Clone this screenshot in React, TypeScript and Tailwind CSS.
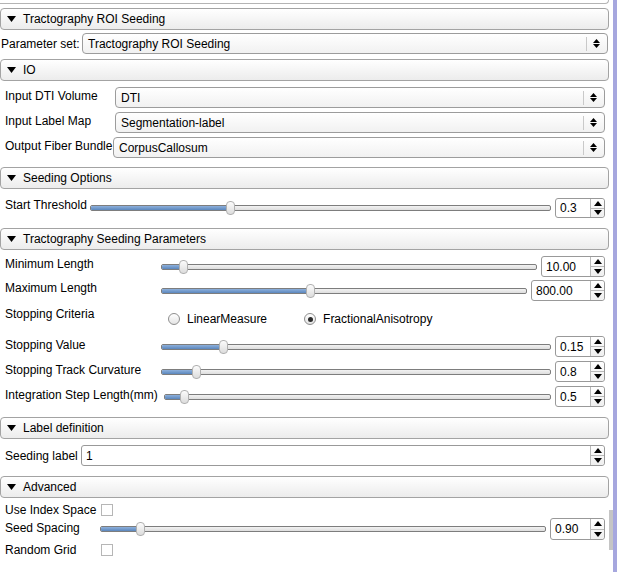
import React from "react";

// small drawings used by several widgets
function Caret() {
  return (
    <svg width="9" height="6" viewBox="0 0 9 6">
      <polygon points="0,0 9,0 4.5,6" fill="#000" />
    </svg>
  );
}

function UpDownArrows() {
  return (
    <svg width="7" height="9" viewBox="0 0 7 9">
      <polygon points="3.5,0 7,4 0,4" fill="#000" />
      <polygon points="0,5 7,5 3.5,9" fill="#000" />
    </svg>
  );
}

function Header({ title, className = "" }: { title: string; className?: string }) {
  return (
    <div
      className={`flex h-[22px] w-[609px] shrink-0 items-center rounded-[4px] border border-[#a3a3a3] bg-gradient-to-b from-white to-[#ececec] ${className}`}
    >
      <div className="ml-[6px] flex w-[16px] items-center">
        <Caret />
      </div>
      <span>{title}</span>
    </div>
  );
}

function Combo({ value, className = "" }: { value: string; className?: string }) {
  return (
    <div
      className={`flex h-full items-center rounded-[4px] border border-[#9c9c9c] bg-gradient-to-b from-white to-[#f1f1f1] ${className}`}
    >
      <span className="flex-1 pl-[5px]">{value}</span>
      <div className="h-[14px] w-px bg-[#c9c9c9]" />
      <div className="ml-[6px] mr-[7px] flex items-center">
        <UpDownArrows />
      </div>
    </div>
  );
}

function Spin({ value, className = "" }: { value: string; className?: string }) {
  return (
    <div className={`flex h-full shrink-0 rounded-[3px] border border-[#999] bg-white ${className}`}>
      <div className="flex flex-1 items-center pl-[4px]">{value}</div>
      <div className="flex w-[14px] flex-col overflow-hidden rounded-r-[3px] border-l border-[#b9b9b9] bg-gradient-to-b from-white to-[#efefef]">
        <div className="flex flex-1 items-center justify-center border-b border-[#b9b9b9]">
          <svg width="8" height="5" viewBox="0 0 8 5">
            <polygon points="4,0 8,5 0,5" fill="#000" />
          </svg>
        </div>
        <div className="flex flex-1 items-center justify-center">
          <svg width="8" height="5" viewBox="0 0 8 5">
            <polygon points="0,0 8,0 4,5" fill="#000" />
          </svg>
        </div>
      </div>
    </div>
  );
}

function Slider({ value, className = "" }: { value: number; className?: string }) {
  const pct = `${value * 100}%`;
  return (
    <div className={`relative h-[14px] ${className}`}>
      <div className="absolute left-0 right-0 top-[4px] h-[6px] overflow-hidden rounded-[2px] border border-[#7d7d7d] bg-gradient-to-b from-[#f2f2f2] to-[#dedede]">
        <div className="h-full bg-gradient-to-b from-[#8db0dc] to-[#5b87bd]" style={{ width: pct }} />
      </div>
      <div
        className="absolute top-0 h-[14px] w-[9px] rounded-[4px] border border-[#b0b0b0] bg-gradient-to-b from-[#fcfcfc] to-[#dcdcdc]"
        style={{ left: `calc(${pct} - 4px)` }}
      />
    </div>
  );
}

function Radio({ checked, label, className = "" }: { checked?: boolean; label: string; className?: string }) {
  return (
    <div className={`flex items-center ${className}`}>
      <div className="flex h-[12px] w-[12px] items-center justify-center rounded-full border border-[#8e8e8e] bg-gradient-to-b from-white to-[#e4e4e4]">
        {checked && <div className="h-[5px] w-[5px] rounded-full bg-[#2b2b2b]" />}
      </div>
      <span className="ml-[7px]">{label}</span>
    </div>
  );
}

function Check() {
  return <div className="h-[12px] w-[12px] border border-[#b6b6b6] bg-white" />;
}

export default function App() {
  return (
    <div className="relative flex h-[572px] w-[617px] overflow-hidden bg-white font-['Liberation_Sans',Arial,sans-serif] text-[12px] leading-none text-black">
      <div className="flex w-[613px] flex-col">
        {/* end of the panel above */}
        <div className="h-[4px] w-[609px] shrink-0 rounded-br-[4px] border-b border-r border-[#b4b4b4]" />

        <Header title="Tractography ROI Seeding" className="mt-[4px]" />
        <div className="mt-[3px] flex h-[21px] w-[608px] items-center">
          <span className="w-[82px] shrink-0 pl-[1px]">Parameter set:</span>
          <Combo value="Tractography ROI Seeding" className="flex-1" />
        </div>

        {/* IO */}
        <Header title="IO" className="mt-[5px]" />
        <div className="mt-[6px] flex h-[21px] w-[605px] items-center">
          <span className="w-[115px] shrink-0 self-start pl-[5px] pt-[3px]">Input DTI Volume</span>
          <Combo value="DTI" className="flex-1" />
        </div>
        <div className="mt-[4px] flex h-[21px] w-[605px] items-center">
          <span className="w-[115px] shrink-0 self-start pl-[5px] pt-[3px]">Input Label Map</span>
          <Combo value="Segmentation-label" className="flex-1" />
        </div>
        <div className="mt-[4px] flex h-[21px] w-[605px] items-center">
          <span className="w-[113px] shrink-0 self-start pl-[5px] pt-[3px]">Output Fiber Bundle</span>
          <Combo value="CorpusCallosum" className="flex-1" />
        </div>

        {/* Seeding Options */}
        <Header title="Seeding Options" className="mt-[9px]" />
        <div className="mt-[9px] flex h-[20px] w-[605px] items-center">
          <span className="w-[90px] shrink-0 pb-[6px] pl-[5px]">Start Threshold</span>
          <Slider value={0.304} className="flex-1" />
          <Spin value="0.3" className="ml-[4px] w-[50px]" />
        </div>

        {/* Tractography Seeding Parameters */}
        <Header title="Tractography Seeding Parameters" className="mt-[10px]" />
        <div className="mt-[6px] flex h-[21px] w-[605px] items-center">
          <span className="w-[161px] shrink-0 pb-[5px] pl-[5px]">Minimum Length</span>
          <Slider value={0.058} className="flex-1" />
          <Spin value="10.00" className="ml-[4px] w-[64px]" />
        </div>
        <div className="mt-[3px] flex h-[21px] w-[605px] items-center">
          <span className="w-[161px] shrink-0 pb-[5px] pl-[5px]">Maximum Length</span>
          <Slider value={0.407} className="flex-1" />
          <Spin value="800.00" className="ml-[4px] w-[74px]" />
        </div>
        <div className="mt-[5px] flex h-[26px] w-[605px]">
          <span className="w-[162px] shrink-0 pl-[5px] pt-[2px]">Stopping Criteria</span>
          <div className="flex items-center self-start pt-[7px]">
            <Radio label="LinearMeasure" className="ml-[6px]" />
            <Radio checked label="FractionalAnisotropy" className="ml-[37px]" />
          </div>
        </div>
        <div className="mt-[4px] flex h-[21px] w-[605px] items-center">
          <span className="w-[161px] shrink-0 pb-[4px] pl-[5px]">Stopping Value</span>
          <Slider value={0.159} className="flex-1" />
          <Spin value="0.15" className="ml-[4px] w-[50px]" />
        </div>
        <div className="mt-[4px] flex h-[21px] w-[605px] items-center">
          <span className="w-[161px] shrink-0 pb-[4px] pl-[5px]">Stopping Track Curvature</span>
          <Slider value={0.09} className="flex-1" />
          <Spin value="0.8" className="ml-[4px] w-[50px]" />
        </div>
        <div className="mt-[4px] flex h-[21px] w-[605px] items-center">
          <span className="w-[164px] shrink-0 whitespace-nowrap pb-[4px] pl-[5px]">Integration Step Length(mm)</span>
          <Slider value={0.052} className="flex-1" />
          <Spin value="0.5" className="ml-[4px] w-[50px]" />
        </div>

        {/* Label definition */}
        <Header title="Label definition" className="mt-[10px]" />
        <div className="mt-[6px] flex h-[21px] w-[605px] items-center">
          <span className="w-[81px] shrink-0 pl-[5px]">Seeding label</span>
          <Spin value="1" className="flex-1" />
        </div>

        {/* Advanced */}
        <Header title="Advanced" className="mt-[10px]" />
        <div className="mt-[5px] flex h-[14px] w-[605px] items-center">
          <span className="w-[101px] shrink-0 pl-[5px]">Use Index Space</span>
          <Check />
        </div>
        <div className="mt-[1px] flex h-[22px] w-[605px] items-center">
          <span className="w-[100px] shrink-0 pb-[2px] pl-[5px]">Seed Spacing</span>
          <Slider value={0.09} className="flex-1" />
          <Spin value="0.90" className="ml-[4px] w-[55px]" />
        </div>
        <div className="mt-[2px] flex h-[16px] w-[605px] items-center">
          <span className="w-[101px] shrink-0 pl-[5px]">Random Grid</span>
          <Check />
        </div>
      </div>

      {/* window edge */}
      <div className="w-[4px] bg-[#a6a7de]" />

      {/* scroll indicator */}
      <div className="absolute left-[609px] top-[510px] h-[40px] w-[4px] bg-[#c5c5c5]" />
    </div>
  );
}
